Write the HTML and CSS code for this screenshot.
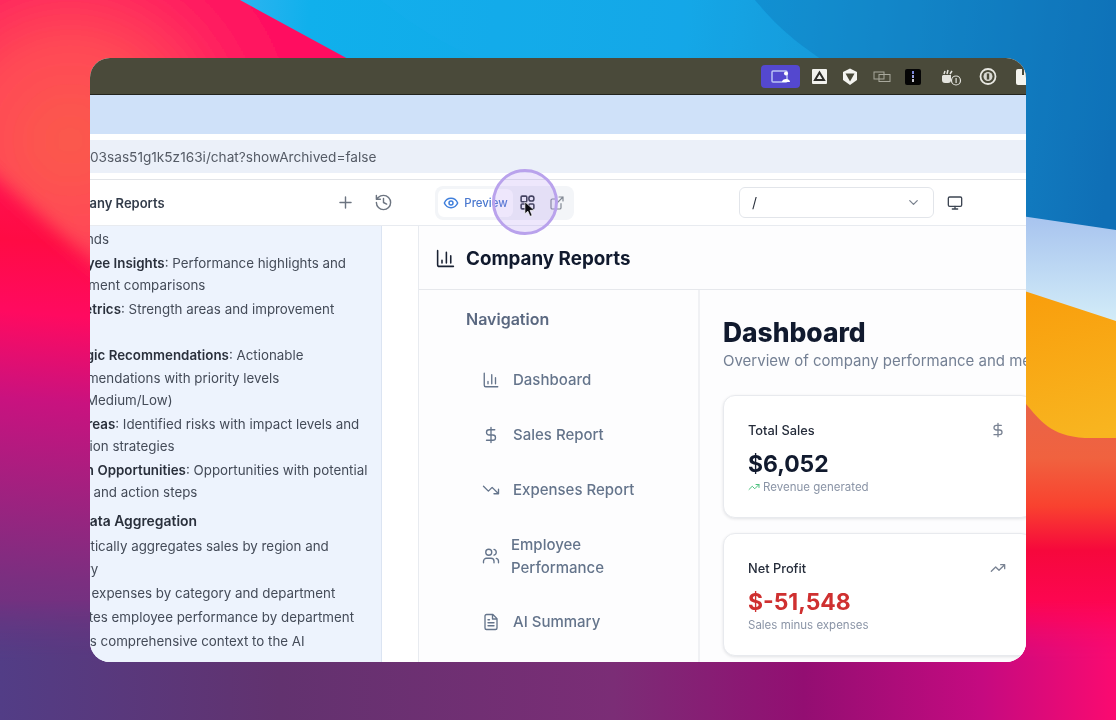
FILE: index.html
```
<!DOCTYPE html>
<html lang="en">
<head>
<meta charset="utf-8">
<title>Company Reports</title>
<link rel="stylesheet" href="styles.css">
</head>
<body>
<svg class="sprite" aria-hidden="true">
  <symbol id="i-chart" viewBox="0 0 24 24"><path d="M3 3v16a2 2 0 0 0 2 2h16M18 17V9M13 17V5M8 17v-3"/></symbol>
  <symbol id="i-dollar" viewBox="0 0 24 24"><path d="M12 2v20M17 5H9.500a3.500 3.500 0 0 0 0 7h5a3.500 3.500 0 0 1 0 7H6"/></symbol>
  <symbol id="i-down" viewBox="0 0 24 24"><path d="M22 17l-8.500-8.500-5 5L2 7M16 17h6v-6"/></symbol>
  <symbol id="i-up" viewBox="0 0 24 24"><path d="M22 7l-8.500 8.500-5-5L2 17M16 7h6v6"/></symbol>
  <symbol id="i-users" viewBox="0 0 24 24"><path d="M16 21v-2a4 4 0 0 0-4-4H6a4 4 0 0 0-4 4v2M22 21v-2a4 4 0 0 0-3-3.870M16 3.130a4 4 0 0 1 0 7.750"/><circle cx="9" cy="7" r="4"/></symbol>
  <symbol id="i-file" viewBox="0 0 24 24"><path d="M14.500 2H6a2 2 0 0 0-2 2v16a2 2 0 0 0 2 2h12a2 2 0 0 0 2-2V7.500L14.500 2zM14 2v6h6M16 13H8M16 17H8M10 9H8"/></symbol>
  <symbol id="i-plus" viewBox="0 0 24 24"><path d="M5 12h14M12 5v14"/></symbol>
  <symbol id="i-history" viewBox="0 0 24 24"><path d="M3 12a9 9 0 1 0 9-9 9.750 9.750 0 0 0-6.740 2.740L3 8M3 3v5h5M12 7v5l4 2"/></symbol>
  <symbol id="i-eye" viewBox="0 0 24 24"><path d="M2 12s3-7 10-7 10 7 10 7-3 7-10 7-10-7-10-7Z"/><circle cx="12" cy="12" r="3"/></symbol>
  <symbol id="i-grid" viewBox="0 0 24 24"><rect x="3" y="3" width="8" height="8" rx="1.500"/><rect x="14" y="3" width="7" height="7" rx="3"/><rect x="3" y="14" width="8" height="7" rx="1.500"/><rect x="14" y="14" width="7" height="7" rx="1.500"/></symbol>
  <symbol id="i-ext" viewBox="0 0 24 24"><path d="M18 13v6a2 2 0 0 1-2 2H5a2 2 0 0 1-2-2V8a2 2 0 0 1 2-2h6M15 3h6v6M10 14 21 3"/></symbol>
  <symbol id="i-chev" viewBox="0 0 24 24"><path d="M6 9l6 6 6-6"/></symbol>
  <symbol id="i-monitor" viewBox="0 0 24 24"><rect x="2" y="3" width="20" height="14" rx="2"/><path d="M8 21h8M12 17v4"/></symbol>
</svg>

<svg class="wallpaper" viewBox="0 0 1116 720" preserveAspectRatio="none" aria-hidden="true">
  <defs>
    <linearGradient id="g-left" gradientUnits="userSpaceOnUse" x1="0" y1="0" x2="-50" y2="720">
      <stop offset="0" stop-color="#ff1060"/>
      <stop offset=".24" stop-color="#ff1050"/>
      <stop offset=".33" stop-color="#ff0b44"/>
      <stop offset=".43" stop-color="#ff0a60"/>
      <stop offset=".55" stop-color="#c9127f"/>
      <stop offset=".8" stop-color="#7a2f80"/>
      <stop offset="1" stop-color="#4a4084"/>
    </linearGradient>
    <radialGradient id="g-glow" gradientUnits="userSpaceOnUse" cx="70" cy="140" r="230">
      <stop offset="0" stop-color="#fb5a4c"/>
      <stop offset=".4" stop-color="#ff4a55"/>
      <stop offset=".8" stop-color="#ff1c60"/>
      <stop offset="1" stop-color="#ff1060"/>
    </radialGradient>
    <filter id="f-soft" x="-10%" y="-10%" width="120%" height="120%"><feGaussianBlur stdDeviation="9"/></filter>
    <linearGradient id="g-right" gradientUnits="userSpaceOnUse" x1="0" y1="400" x2="0" y2="720">
      <stop offset="0" stop-color="#e96448"/>
      <stop offset=".18" stop-color="#f0623f"/>
      <stop offset=".33" stop-color="#f9422f"/>
      <stop offset=".47" stop-color="#f6083c"/>
      <stop offset=".69" stop-color="#ff0558"/>
      <stop offset=".9" stop-color="#e8108a"/>
      <stop offset="1" stop-color="#d8108c"/>
    </linearGradient>
    <linearGradient id="g-bottom" gradientUnits="userSpaceOnUse" x1="0" y1="0" x2="1116" y2="0">
      <stop offset="0" stop-color="#523d86"/>
      <stop offset=".25" stop-color="#62326f"/>
      <stop offset=".55" stop-color="#7b2d76"/>
      <stop offset=".72" stop-color="#930e72"/>
      <stop offset=".88" stop-color="#c50a80"/>
      <stop offset="1" stop-color="#fb0a70"/>
    </linearGradient>
    <linearGradient id="g-blue" gradientUnits="userSpaceOnUse" x1="240" y1="0" x2="1116" y2="90">
      <stop offset="0" stop-color="#2cb4f0"/>
      <stop offset=".08" stop-color="#10b0ec"/>
      <stop offset=".5" stop-color="#12a6e6"/>
      <stop offset=".72" stop-color="#1590d0"/>
      <stop offset="1" stop-color="#0f6fb6"/>
    </linearGradient>
    <linearGradient id="g-sky" gradientUnits="userSpaceOnUse" x1="0" y1="220" x2="0" y2="320">
      <stop offset="0" stop-color="#a9c5ef"/>
      <stop offset="1" stop-color="#d2ecf8"/>
    </linearGradient>
    <linearGradient id="g-sun" gradientUnits="userSpaceOnUse" x1="1040" y1="290" x2="1080" y2="440">
      <stop offset="0" stop-color="#f99e0c"/>
      <stop offset="1" stop-color="#f8b520"/>
    </linearGradient>
    <linearGradient id="g-fade" gradientUnits="userSpaceOnUse" x1="0" y1="600" x2="0" y2="662">
      <stop offset="0" stop-color="#fff" stop-opacity="0"/>
      <stop offset="1" stop-color="#fff"/>
    </linearGradient>
    <mask id="m-fade" maskUnits="userSpaceOnUse" x="0" y="600" width="1116" height="120"><rect y="600" width="1116" height="120" fill="url(#g-fade)"/></mask>
  </defs>
  <rect width="1116" height="720" fill="url(#g-left)"/>
  <path d="M-40 145 400 535V-40H-40Z" fill="url(#g-glow)" filter="url(#f-soft)"/>
  <path d="M600 400H1116V720H600Z" fill="url(#g-right)"/>
  <path d="M240 0 350 60V300H600V400H1116V0Z" fill="url(#g-blue)"/>
  <path d="M380 0C420 30 470 65 560 85 600 92 620 110 640 130H900L830 65C800 45 780 30 755 0Z" fill="#1fb0ee" opacity=".2"/>
  <path d="M755 0C780 30 800 45 830 65 860 88 890 110 900 130H1116V0Z" fill="#0f78bd" opacity=".35"/>
  <path d="M1000 213 1116 230V340H1000Z" fill="url(#g-sky)"/>
  <path d="M1000 283 1116 321V450H1000Z" fill="url(#g-sun)"/>
  <path d="M1000 380 1026 404C1040 420 1050 436 1085 438H1116V640H1000Z" fill="url(#g-right)"/>
  <rect y="600" width="1116" height="120" fill="url(#g-bottom)" mask="url(#m-fade)"/>
</svg>

<div class="desk">
  <main class="window">
    <div class="menubar">
      <svg class="tray" viewBox="0 0 265 37" width="265" height="37" aria-hidden="true">
        <rect x="0" y="7" width="39" height="23" rx="4" fill="#5448cf"/>
        <rect x="11" y="13" width="15" height="11" rx="1" fill="none" stroke="#b9c3f5" stroke-width="1.500"/>
        <circle cx="25" cy="15.500" r="2" fill="#fff"/>
        <path d="M21 24c0-4 8-4 8 0Z" fill="#fff"/>
        <rect x="51" y="11" width="15" height="15" rx="1" fill="#f2f2ee"/>
        <path d="M58.500 14.500 63 22H54Z" fill="none" stroke="#2e2e2a" stroke-width="2"/>
        <path d="M89 10.500 96 14V22L89 27 82 22V14Z" fill="#f4f4f0"/>
        <path d="M84.500 15.500H93.500L89 23.500Z" fill="#4a4a3a"/>
        <rect x="113" y="14" width="10" height="7" fill="none" stroke="#a8a89c" stroke-width="1"/>
        <rect x="118" y="16.500" width="11" height="7" fill="none" stroke="#a8a89c" stroke-width="1"/>
        <rect x="144" y="11" width="16" height="16" rx="2" fill="#050505"/>
        <rect x="151" y="13" width="2" height="3" fill="#7a86d8"/>
        <rect x="151" y="17" width="2" height="3" fill="#9aa2e0"/>
        <rect x="151" y="21" width="2" height="3" fill="#c8c8d0"/>
        <path d="M182 17h8v5a3 3 0 0 1-3 3h-3a3 3 0 0 1-3-3v-4Z" fill="#e4e4de"/>
        <path d="M183 16l1-3M186 16l1-4M189 16l2-3" stroke="#e4e4de" stroke-width="1.500" fill="none"/>
        <circle cx="195" cy="22.500" r="4.500" fill="#4a4a3a" stroke="#e4e4de" stroke-width="1.200"/>
        <rect x="194.500" y="20" width="1.200" height="5" fill="#e4e4de"/>
        <circle cx="227" cy="18.500" r="7.500" fill="none" stroke="#e8e8e2" stroke-width="1.800"/>
        <circle cx="227" cy="18.500" r="4.500" fill="#d8d8d2"/>
        <rect x="225.800" y="15.500" width="2.400" height="6" fill="#4a4a3a"/>
        <rect x="255" y="11" width="15" height="16" rx="2" fill="#f4f4ee"/>
        <rect x="261" y="11" width="2" height="6" fill="#4a4a3a"/>
      </svg>
    </div>
    <div class="tabband"></div>
    <div class="addressbar"><span class="url">03sas51g1k5z163i/chat?showArchived=false</span></div>

    <header class="toolbar">
      <div class="chat-head">
        <h2 class="chat-title">Company Reports</h2>
        <svg class="ic ic-head plus"><use href="#i-plus"/></svg>
        <svg class="ic ic-head"><use href="#i-history"/></svg>
      </div>
      <div class="view-switch">
        <button class="view-btn active"><svg class="ic ic-eye"><use href="#i-eye"/></svg>Preview</button>
        <button class="view-btn icon-only"><svg class="ic ic-dark"><use href="#i-grid"/></svg></button>
        <button class="view-btn icon-only"><svg class="ic ic-muted"><use href="#i-ext"/></svg></button>
        <span class="click-ring"></span>
        <svg class="pointer" viewBox="0 0 14 20" width="12" height="17" aria-hidden="true"><path d="M1 1v14l3.500-3 2.500 6 2.500-1-2.500-6h5Z" fill="#0b0b10" stroke="#fff" stroke-width=".8"/></svg>
      </div>
      <div class="path-select"><span>/</span><svg class="ic ic-chev"><use href="#i-chev"/></svg></div>
      <svg class="ic ic-monitor"><use href="#i-monitor"/></svg>
    </header>

    <div class="workspace">
      <aside class="chat">
        <div class="chat-scroll">
          <ul class="bullets">
            <li class="tail"><span>trends</span></li>
            <li><span><b>Employee Insights</b>: Performance highlights and</span><span>department comparisons</span></li>
            <li><span><b>KPI Metrics</b>: Strength areas and improvement</span><span>areas</span></li>
            <li><span><b>Strategic Recommendations</b>: Actionable</span><span>recommendations with priority levels</span><span>(High/Medium/Low)</span></li>
            <li><span><b>Risk Areas</b>: Identified risks with impact levels and</span><span>mitigation strategies</span></li>
            <li><span><b>Growth Opportunities</b>: Opportunities with potential</span><span>impact and action steps</span></li>
          </ul>
          <h3 class="chat-sub">Smart Data Aggregation</h3>
          <ul class="bullets tight">
            <li><span>Automatically aggregates sales by region and</span><span>category</span></li>
            <li><span>Groups expenses by category and department</span></li>
            <li><span>Calculates employee performance by department</span></li>
            <li><span>Provides comprehensive context to the AI</span></li>
          </ul>
        </div>
      </aside>
      <div class="gutter"></div>
      <section class="app">
        <div class="app-head">
          <svg class="ic ic-brand"><use href="#i-chart"/></svg>
          <h1 class="app-title">Company Reports</h1>
        </div>
        <div class="app-body">
          <nav class="nav">
            <h2 class="nav-title">Navigation</h2>
            <a class="nav-item"><svg class="ic"><use href="#i-chart"/></svg><span>Dashboard</span></a>
            <a class="nav-item"><svg class="ic"><use href="#i-dollar"/></svg><span>Sales Report</span></a>
            <a class="nav-item"><svg class="ic"><use href="#i-down"/></svg><span>Expenses Report</span></a>
            <a class="nav-item two-line"><svg class="ic"><use href="#i-users"/></svg><span>Employee<br>Performance</span></a>
            <a class="nav-item"><svg class="ic"><use href="#i-file"/></svg><span>AI Summary</span></a>
          </nav>
          <div class="content">
            <h1 class="page-title">Dashboard</h1>
            <p class="page-sub">Overview of company performance and metrics</p>
            <article class="card">
              <div class="card-top"><h3>Total Sales</h3><svg class="ic ic-card"><use href="#i-dollar"/></svg></div>
              <div class="value">$6,052</div>
              <div class="note"><svg class="ic ic-trend"><use href="#i-up"/></svg>Revenue generated</div>
            </article>
            <article class="card">
              <div class="card-top"><h3>Net Profit</h3><svg class="ic ic-card"><use href="#i-up"/></svg></div>
              <div class="value negative">$-51,548</div>
              <div class="note">Sales minus expenses</div>
            </article>
          </div>
        </div>
      </section>
    </div>
  </main>
</div>
</body>
</html>
```
FILE: styles.css
```
* { box-sizing: border-box; }
html, body { margin: 0; height: 720px; overflow: hidden; }
body { font-family: "Inter", "Liberation Sans", sans-serif; position: relative; background: #4a4084; }
h1, h2, h3, p, ul { margin: 0; padding: 0; }

.sprite { display: none; }
.wallpaper { position: absolute; inset: 0; width: 1116px; height: 720px; }

.desk { position: relative; padding: 58px 90px; height: 720px; }
.window {
  width: 936px; height: 604px; border-radius: 20px; overflow: hidden;
  background: #fff; display: flex; flex-direction: column; filter: blur(.3px);
}

.ic { width: 18px; height: 18px; fill: none; stroke: currentColor; stroke-width: 2; stroke-linecap: round; stroke-linejoin: round; flex: none; }

.menubar { height: 37px; background: #4a4a3a; border-bottom: 1px solid #23241d; display: flex; padding-left: 671px; flex: none; }
.tray { flex: none; display: block; }
.tabband { height: 39px; background: #cfe1f9; flex: none; }
.addressbar { height: 33px; margin-top: 6px; background: #ebf0f9; display: flex; align-items: center; flex: none; }
.url { font-size: 13.650px; color: #555b66; white-space: nowrap; }

.toolbar { height: 47px; margin-top: 6px; border-top: 1px solid #e2e4e8; border-bottom: 1px solid #e8ebf0; display: flex; align-items: center; flex: none; background: #fff; }
.chat-head { width: 303px; display: flex; align-items: center; flex: none; }
.chat-title { font-size: 13px; font-weight: 600; color: #333c4a; margin-left: -38px; white-space: nowrap; }
.ic-head { color: #6c7480; margin-left: 19.500px; width: 19px; height: 19px; stroke-width: 1.800; }
.ic-head.plus { margin-left: auto; }

.view-switch { margin-left: 42px; width: 139px; height: 34px; padding: 3px; border-radius: 8px; background: #f3f5f8; display: flex; align-items: center; position: relative; flex: none; }
.view-btn { border: 0; background: none; padding: 0; height: 28px; display: flex; align-items: center; justify-content: center; font: 500 11.400px "Inter", sans-serif; color: #4a78cf; flex: none; }
.view-btn.active { width: 75px; background: #fff; border-radius: 6px; gap: 5px; }
.view-btn.icon-only { width: 29px; }
.ic-eye { width: 16px; height: 16px; color: #3f7fdc; stroke-width: 2.200; }
.ic-dark { width: 17px; height: 17px; color: #2b323e; stroke-width: 2.200; }
.ic-muted { width: 16px; height: 16px; color: #818893; stroke-width: 1.800; }
.click-ring { position: absolute; left: 57px; top: -17px; width: 66px; height: 66px; border-radius: 50%; border: 3px solid #b9a2ec; background: rgba(170, 135, 240, .2); }
.pointer { position: absolute; left: 89px; top: 15px; }

.path-select { margin-left: 165px; width: 195px; height: 31px; border: 1px solid #e2e5ea; border-radius: 6px; display: flex; align-items: center; justify-content: space-between; padding: 0 12px; font-size: 14px; color: #2a303c; flex: none; }
.ic-chev { width: 15px; height: 15px; color: #7a828e; }
.ic-monitor { margin-left: 13px; width: 16px; height: 16px; color: #3d4552; }

.workspace { flex: 1; display: flex; min-height: 0; }
.chat { width: 292px; background: #edf3fd; border-right: 1px solid #dbe4f2; flex: none; overflow: hidden; }
.chat-scroll { margin-left: -43px; padding-top: 2px; font-size: 13.350px; line-height: 22.500px; color: #444b58; white-space: nowrap; }
.bullets { list-style: none; display: flex; flex-direction: column; gap: 1.200px; }
.bullets span { display: block; }
.bullets b { font-weight: 600; color: #2a303c; }
.tail { margin-left: 22px; }
.chat-sub { font-size: 13.900px; font-weight: 600; color: #2a303c; line-height: 22.500px; margin: 6px 0 3px -11px; }
.tight { margin-left: -5px; gap: 1.500px; }

.gutter { width: 37px; border-right: 1px solid #e8ebf0; flex: none; }
.app { flex: 1; min-width: 0; display: flex; flex-direction: column; background: #fdfdfe; }
.app-head { height: 64px; display: flex; align-items: center; gap: 10px; padding: 1px 0 0 16px; border-bottom: 1px solid #e6e8ec; flex: none; }
.ic-brand { width: 21px; height: 21px; color: #1a2233; stroke-width: 1.800; }
.app-title { font-size: 18.800px; font-weight: 700; color: #111a2e; white-space: nowrap; }

.app-body { flex: 1; display: flex; min-height: 0; }
.nav { width: 281px; border-right: 2px solid #f0f1f4; padding: 20px 0 0 47px; color: #64748b; flex: none; }
.nav-title { font-size: 16px; font-weight: 600; color: #5a6880; line-height: 19px; margin-bottom: 23px; }
.nav-item { display: flex; align-items: center; gap: 13px; padding-left: 16px; height: 55px; font-size: 15px; font-weight: 500; line-height: 23px; }
.nav-item .ic { stroke-width: 1.800; }
.nav-item.two-line { height: 77px; gap: 11px; }

.content { flex: 1; min-width: 0; padding: 24px 0 0 23px; }
.page-title { font-size: 26.400px; font-weight: 800; color: #111a2e; line-height: 36px; white-space: nowrap; }
.page-sub { font-size: 15px; color: #748094; line-height: 22px; margin-bottom: 23px; white-space: nowrap; }
.card { width: 310px; height: 123px; border: 1px solid #e8eaee; border-radius: 12px; box-shadow: 0 1px 3px rgba(30, 40, 60, .12); background: #fff; padding: 26px 24px 0; margin-bottom: 15px; }
.card-top { display: flex; justify-content: space-between; align-items: center; padding-right: 2px; }
.card-top h3 { font-size: 12.800px; font-weight: 500; color: #252c3a; }
.ic-card { width: 16px; height: 16px; color: #7b8494; }
.value { font-size: 22.900px; font-weight: 700; color: #111a2e; line-height: 30px; margin-top: 11px; }
.value.negative { color: #cf3030; }
.note { display: flex; align-items: center; gap: 3px; font-size: 11.500px; color: #8a94a6; line-height: 16px; }
.ic-trend { width: 12px; height: 12px; color: #4cc07e; }
```
